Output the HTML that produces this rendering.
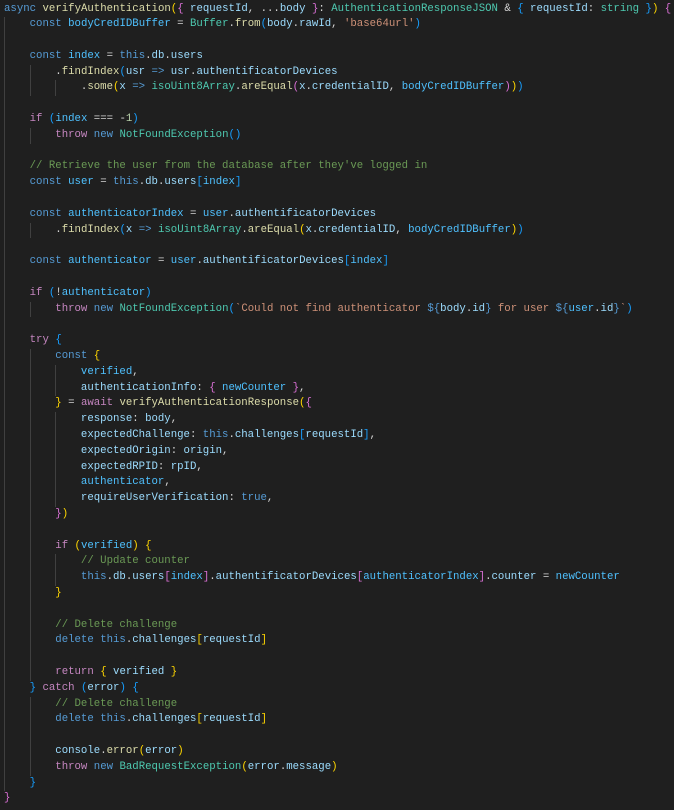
<!DOCTYPE html>
<html><head><meta charset="utf-8"><style>
html,body{margin:0;padding:0;background:#1f1f1f;width:674px;height:810px;overflow:hidden}
pre{position:absolute;left:4px;top:1.5px;margin:0;font-family:"Liberation Mono",monospace;font-size:10.7px;line-height:15.8px;color:#d4d4d4;white-space:pre}
.i{display:inline-block;width:4ch;box-shadow:inset 1px 0 #404040;height:15.8px;vertical-align:top}
.k{color:#569cd6}.c{color:#c586c0}.v{color:#9cdcfe}.f{color:#dcdcaa}.t{color:#4ec9b0}.s{color:#ce9178}.cm{color:#6a9955}.cn{color:#4fc1ff}.n{color:#b5cea8}
.g{color:#ffd700}.o{color:#da70d6}.b{color:#179fff}
</style></head><body><pre><span class="k">async</span> <span class="f">verifyAuthentication</span><span class="g">(</span><span class="o">{</span> <span class="v">requestId</span>, ...<span class="v">body</span> <span class="o">}</span>: <span class="t">AuthenticationResponseJSON</span> &amp; <span class="b">{</span> <span class="v">requestId</span>: <span class="t">string</span> <span class="b">}</span><span class="g">)</span> <span class="o">{</span>
<span class="i"></span><span class="k">const</span> <span class="cn">bodyCredIDBuffer</span> = <span class="t">Buffer</span>.<span class="f">from</span><span class="b">(</span><span class="v">body</span>.<span class="v">rawId</span>, <span class="s">'base64url'</span><span class="b">)</span>
<span class="i"></span>
<span class="i"></span><span class="k">const</span> <span class="cn">index</span> = <span class="k">this</span>.<span class="v">db</span>.<span class="v">users</span>
<span class="i"></span><span class="i"></span>.<span class="f">findIndex</span><span class="b">(</span><span class="v">usr</span> <span class="k">=&gt;</span> <span class="v">usr</span>.<span class="v">authentificatorDevices</span>
<span class="i"></span><span class="i"></span><span class="i"></span>.<span class="f">some</span><span class="g">(</span><span class="v">x</span> <span class="k">=&gt;</span> <span class="t">isoUint8Array</span>.<span class="f">areEqual</span><span class="o">(</span><span class="v">x</span>.<span class="v">credentialID</span>, <span class="cn">bodyCredIDBuffer</span><span class="o">)</span><span class="g">)</span><span class="b">)</span>
<span class="i"></span>
<span class="i"></span><span class="c">if</span> <span class="b">(</span><span class="cn">index</span> === -<span class="n">1</span><span class="b">)</span>
<span class="i"></span><span class="i"></span><span class="c">throw</span> <span class="k">new</span> <span class="t">NotFoundException</span><span class="b">(</span><span class="b">)</span>
<span class="i"></span>
<span class="i"></span><span class="cm">// Retrieve the user from the database after they've logged in</span>
<span class="i"></span><span class="k">const</span> <span class="cn">user</span> = <span class="k">this</span>.<span class="v">db</span>.<span class="v">users</span><span class="b">[</span><span class="cn">index</span><span class="b">]</span>
<span class="i"></span>
<span class="i"></span><span class="k">const</span> <span class="cn">authenticatorIndex</span> = <span class="cn">user</span>.<span class="v">authentificatorDevices</span>
<span class="i"></span><span class="i"></span>.<span class="f">findIndex</span><span class="b">(</span><span class="v">x</span> <span class="k">=&gt;</span> <span class="t">isoUint8Array</span>.<span class="f">areEqual</span><span class="g">(</span><span class="v">x</span>.<span class="v">credentialID</span>, <span class="cn">bodyCredIDBuffer</span><span class="g">)</span><span class="b">)</span>
<span class="i"></span>
<span class="i"></span><span class="k">const</span> <span class="cn">authenticator</span> = <span class="cn">user</span>.<span class="v">authentificatorDevices</span><span class="b">[</span><span class="cn">index</span><span class="b">]</span>
<span class="i"></span>
<span class="i"></span><span class="c">if</span> <span class="b">(</span>!<span class="cn">authenticator</span><span class="b">)</span>
<span class="i"></span><span class="i"></span><span class="c">throw</span> <span class="k">new</span> <span class="t">NotFoundException</span><span class="b">(</span><span class="s">`Could not find authenticator </span><span class="k">${</span><span class="v">body</span>.<span class="v">id</span><span class="k">}</span><span class="s"> for user </span><span class="k">${</span><span class="cn">user</span>.<span class="v">id</span><span class="k">}</span><span class="s">`</span><span class="b">)</span>
<span class="i"></span>
<span class="i"></span><span class="c">try</span> <span class="b">{</span>
<span class="i"></span><span class="i"></span><span class="k">const</span> <span class="g">{</span>
<span class="i"></span><span class="i"></span><span class="i"></span><span class="cn">verified</span>,
<span class="i"></span><span class="i"></span><span class="i"></span><span class="v">authenticationInfo</span>: <span class="o">{</span> <span class="cn">newCounter</span> <span class="o">}</span>,
<span class="i"></span><span class="i"></span><span class="g">}</span> = <span class="c">await</span> <span class="f">verifyAuthenticationResponse</span><span class="g">(</span><span class="o">{</span>
<span class="i"></span><span class="i"></span><span class="i"></span><span class="v">response</span>: <span class="v">body</span>,
<span class="i"></span><span class="i"></span><span class="i"></span><span class="v">expectedChallenge</span>: <span class="k">this</span>.<span class="v">challenges</span><span class="b">[</span><span class="v">requestId</span><span class="b">]</span>,
<span class="i"></span><span class="i"></span><span class="i"></span><span class="v">expectedOrigin</span>: <span class="v">origin</span>,
<span class="i"></span><span class="i"></span><span class="i"></span><span class="v">expectedRPID</span>: <span class="v">rpID</span>,
<span class="i"></span><span class="i"></span><span class="i"></span><span class="cn">authenticator</span>,
<span class="i"></span><span class="i"></span><span class="i"></span><span class="v">requireUserVerification</span>: <span class="k">true</span>,
<span class="i"></span><span class="i"></span><span class="o">}</span><span class="g">)</span>
<span class="i"></span><span class="i"></span>
<span class="i"></span><span class="i"></span><span class="c">if</span> <span class="g">(</span><span class="cn">verified</span><span class="g">)</span> <span class="g">{</span>
<span class="i"></span><span class="i"></span><span class="i"></span><span class="cm">// Update counter</span>
<span class="i"></span><span class="i"></span><span class="i"></span><span class="k">this</span>.<span class="v">db</span>.<span class="v">users</span><span class="o">[</span><span class="cn">index</span><span class="o">]</span>.<span class="v">authentificatorDevices</span><span class="o">[</span><span class="cn">authenticatorIndex</span><span class="o">]</span>.<span class="v">counter</span> = <span class="cn">newCounter</span>
<span class="i"></span><span class="i"></span><span class="g">}</span>
<span class="i"></span><span class="i"></span>
<span class="i"></span><span class="i"></span><span class="cm">// Delete challenge</span>
<span class="i"></span><span class="i"></span><span class="k">delete</span> <span class="k">this</span>.<span class="v">challenges</span><span class="g">[</span><span class="v">requestId</span><span class="g">]</span>
<span class="i"></span><span class="i"></span>
<span class="i"></span><span class="i"></span><span class="c">return</span> <span class="g">{</span> <span class="v">verified</span> <span class="g">}</span>
<span class="i"></span><span class="b">}</span> <span class="c">catch</span> <span class="b">(</span><span class="v">error</span><span class="b">)</span> <span class="b">{</span>
<span class="i"></span><span class="i"></span><span class="cm">// Delete challenge</span>
<span class="i"></span><span class="i"></span><span class="k">delete</span> <span class="k">this</span>.<span class="v">challenges</span><span class="g">[</span><span class="v">requestId</span><span class="g">]</span>
<span class="i"></span><span class="i"></span>
<span class="i"></span><span class="i"></span><span class="v">console</span>.<span class="f">error</span><span class="g">(</span><span class="v">error</span><span class="g">)</span>
<span class="i"></span><span class="i"></span><span class="c">throw</span> <span class="k">new</span> <span class="t">BadRequestException</span><span class="g">(</span><span class="v">error</span>.<span class="v">message</span><span class="g">)</span>
<span class="i"></span><span class="b">}</span>
<span class="o">}</span></pre></body></html>
